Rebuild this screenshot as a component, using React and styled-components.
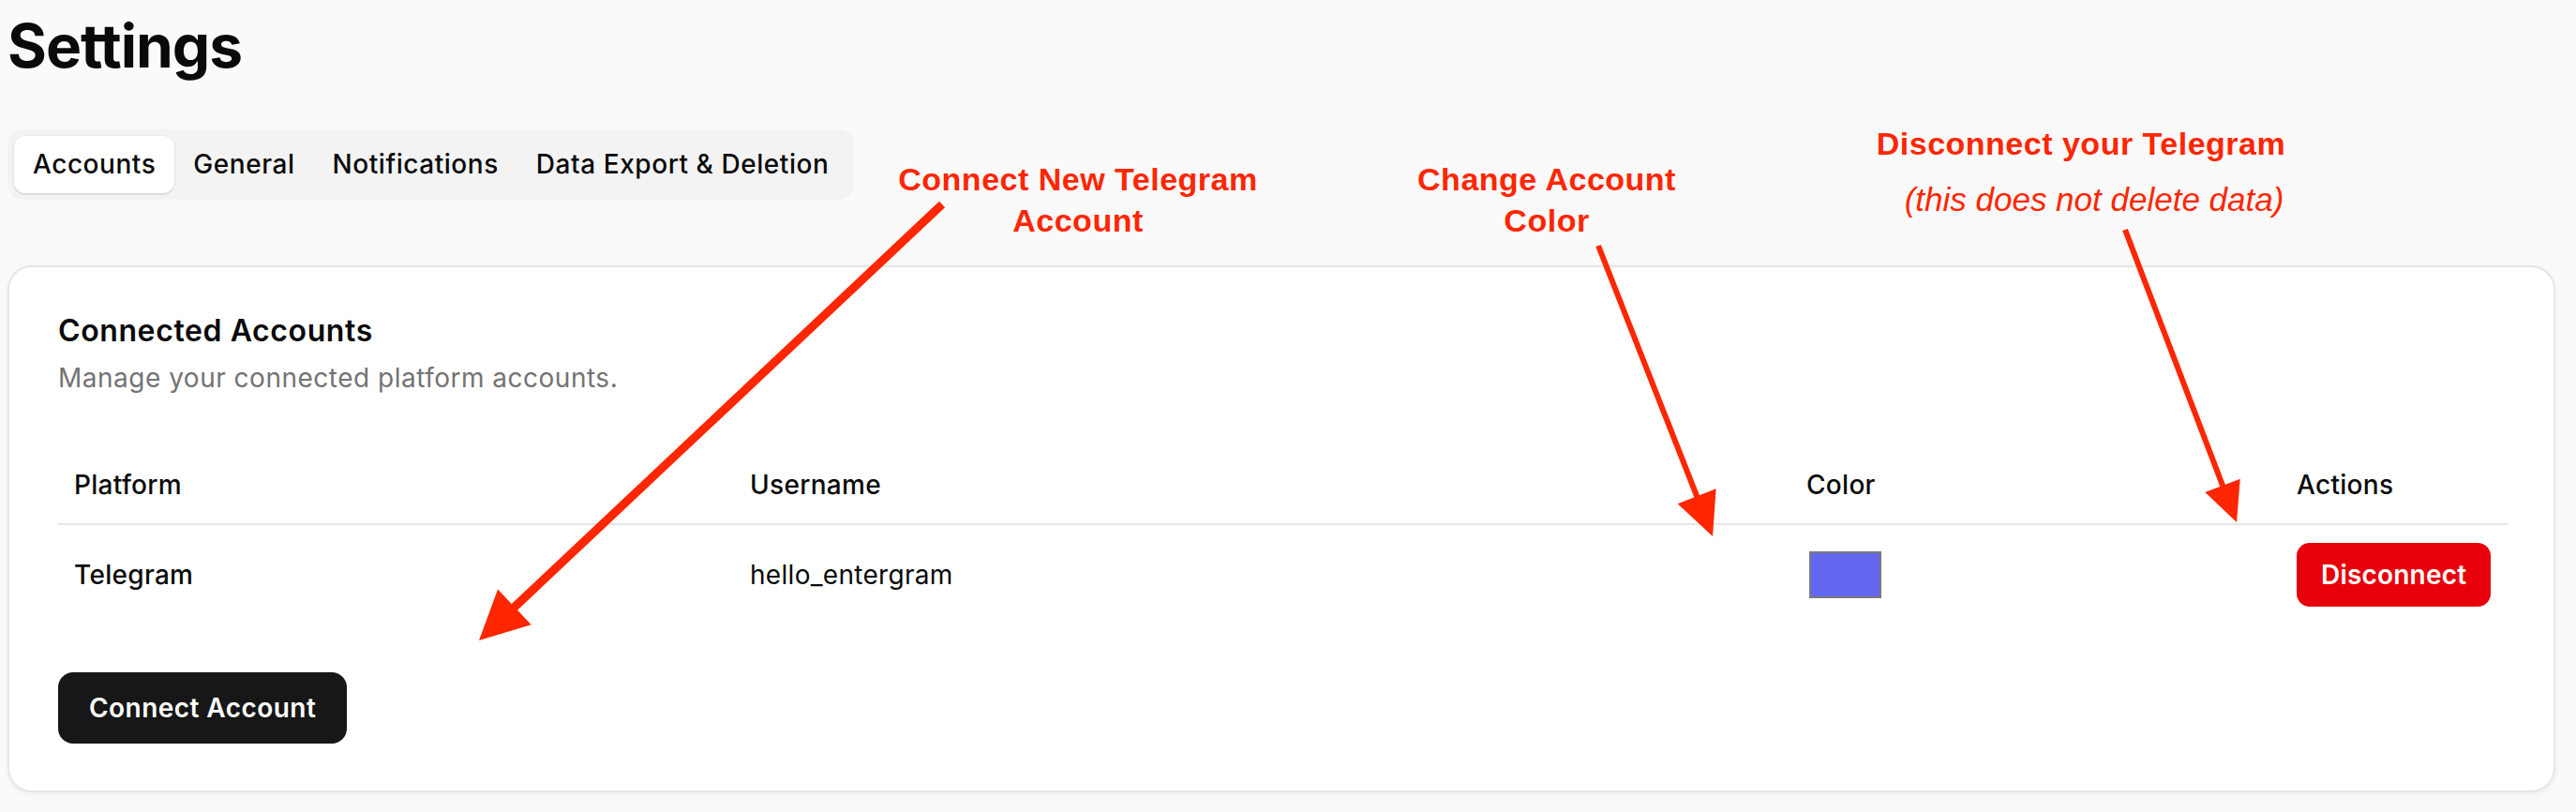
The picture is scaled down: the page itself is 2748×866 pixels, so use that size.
import React from "react";
import styled, { createGlobalStyle } from "styled-components";

const RED = "#ff2600";

const GlobalStyle = createGlobalStyle`
  html, body {
    margin: 0;
    padding: 0;
    background: #fafafa;
  }
  body {
    font-family: Inter, "Noto Sans", sans-serif;
    color: #0a0a0a;
  }
  * {
    box-sizing: border-box;
  }
`;

const Page = styled.div`
  position: relative;
  width: 2748px;
  height: 866px;
  padding: 17px 22px 0 8px;
  overflow: hidden;
`;

const Title = styled.h1`
  margin: 0;
  font-size: 64px;
  line-height: 64px;
  font-weight: 700;
  letter-spacing: -1px;
`;

const TabList = styled.div`
  display: flex;
  width: fit-content;
  margin-top: 57px;
  padding: 7px;
  border-radius: 16px;
  background: #f3f3f3;
`;

const Tab = styled.div`
  height: 61px;
  padding: 0 20px;
  line-height: 61px;
  font-size: 28px;
  font-weight: 500;
  letter-spacing: 0.55px;
  border-radius: 12px;
  background: ${(p) => (p.$active ? "#ffffff" : "transparent")};
  box-shadow: ${(p) =>
    p.$active ? "0 1px 3px rgba(0,0,0,0.12), 0 1px 2px rgba(0,0,0,0.06)" : "none"};
`;

const Card = styled.section`
  margin-top: 70px;
  padding: 52px 49px 50px 52px;
  border: 2px solid #e6e6e6;
  border-radius: 26px;
  background: #ffffff;
  box-shadow: 0 2px 6px rgba(0, 0, 0, 0.06);
`;

const CardTitle = styled.h2`
  margin: 0;
  font-size: 32px;
  line-height: 32px;
  font-weight: 600;
  letter-spacing: 0.6px;
`;

const CardDescription = styled.p`
  margin: 14px 0 0;
  font-size: 28px;
  line-height: 40px;
  letter-spacing: 0.5px;
  color: #737373;
`;

const Table = styled.div`
  margin-top: 53px;
`;

const Row = styled.div`
  display: grid;
  grid-template-columns: 721px 1127px 523px 1fr;
  align-items: center;
  height: ${(p) => (p.$head ? "84px" : "106px")};
  border-bottom: ${(p) => (p.$head ? "2px solid #e5e5e5" : "none")};
`;

const Cell = styled.div`
  padding-left: 17px;
  font-size: 28px;
  line-height: 40px;
  letter-spacing: 0.3px;
  font-weight: ${(p) => p.$weight || 400};
`;

const Swatch = styled.div`
  width: 77px;
  height: 50px;
  margin-left: 3px;
  background: ${(p) => p.$color};
  border: 2px solid #7b7b7b;
`;

const DangerButton = styled.button`
  height: 68px;
  padding: 0 26px;
  border: none;
  border-radius: 14px;
  background: #e7000b;
  color: #ffffff;
  font-family: inherit;
  font-size: 28px;
  font-weight: 600;
  letter-spacing: 0.2px;
`;

const PrimaryButton = styled.button`
  display: block;
  margin-top: 51px;
  height: 76px;
  padding: 0 33px;
  border: none;
  border-radius: 16px;
  background: #171717;
  color: #ffffff;
  font-family: inherit;
  font-size: 28px;
  font-weight: 600;
  letter-spacing: 0.45px;
`;

const Overlay = styled.svg`
  position: absolute;
  left: 0;
  top: 0;
  pointer-events: none;
`;

const Note = styled.div`
  position: absolute;
  left: ${(p) => p.$center - 300}px;
  top: ${(p) => p.$top}px;
  width: 600px;
  text-align: center;
  color: ${RED};
  font-family: "Liberation Sans", Arial, sans-serif;
  font-size: 34px;
  line-height: 44px;
  font-weight: 700;
  letter-spacing: 0.5px;
`;

const NoteLine = styled.span`
  display: block;
`;

const NoteAside = styled.span`
  display: block;
  margin-top: 16px;
  padding-left: 28px;
  font-size: 35px;
  font-weight: 400;
  font-style: italic;
  letter-spacing: 0;
`;

function Arrow({ from, to, width, head, spread }) {
  const dx = to[0] - from[0];
  const dy = to[1] - from[1];
  const len = Math.hypot(dx, dy);
  const ux = dx / len;
  const uy = dy / len;
  const bx = to[0] - ux * head;
  const by = to[1] - uy * head;
  const px = -uy * spread;
  const py = ux * spread;
  return (
    <g>
      <line
        x1={from[0]}
        y1={from[1]}
        x2={bx + ux * 4}
        y2={by + uy * 4}
        stroke={RED}
        strokeWidth={width}
      />
      <polygon
        points={`${to[0]},${to[1]} ${bx + px},${by + py} ${bx - px},${by - py}`}
        fill={RED}
      />
    </g>
  );
}

const tabs = ["Accounts", "General", "Notifications", "Data Export & Deletion"];

const accounts = [
  { platform: "Telegram", username: "hello_entergram", color: "#6366f1" },
];

export default function App() {
  return (
    <Page>
      <GlobalStyle />
      <Title>Settings</Title>

      <TabList>
        {tabs.map((t, i) => (
          <Tab key={t} $active={i === 0}>
            {t}
          </Tab>
        ))}
      </TabList>

      <Card>
        <CardTitle>Connected Accounts</CardTitle>
        <CardDescription>Manage your connected platform accounts.</CardDescription>

        <Table>
          <Row $head>
            <Cell $weight={500}>Platform</Cell>
            <Cell $weight={500}>Username</Cell>
            <Cell $weight={500}>Color</Cell>
            <Cell $weight={500}>Actions</Cell>
          </Row>
          {accounts.map((a) => (
            <Row key={a.username}>
              <Cell $weight={500}>{a.platform}</Cell>
              <Cell>{a.username}</Cell>
              <Cell>
                <Swatch $color={a.color} />
              </Cell>
              <Cell>
                <DangerButton>Disconnect</DangerButton>
              </Cell>
            </Row>
          ))}
        </Table>

        <PrimaryButton>Connect Account</PrimaryButton>
      </Card>

      <Note $center={1150} $top={169}>
        <NoteLine>Connect New Telegram</NoteLine>
        <NoteLine>Account</NoteLine>
      </Note>
      <Note $center={1650} $top={169}>
        <NoteLine>Change Account</NoteLine>
        <NoteLine>Color</NoteLine>
      </Note>
      <Note $center={2220} $top={131}>
        <NoteLine>Disconnect your Telegram</NoteLine>
        <NoteAside>(this does not delete data)</NoteAside>
      </Note>

      <Overlay width="2748" height="866" viewBox="0 0 2748 866">
        <Arrow from={[1005, 218]} to={[511, 683]} width={9} head={52} spread={26} />
        <Arrow from={[1705, 262]} to={[1827, 572]} width={6} head={46} spread={22} />
        <Arrow from={[2267, 245]} to={[2386, 557]} width={6} head={42} spread={20} />
      </Overlay>
    </Page>
  );
}
